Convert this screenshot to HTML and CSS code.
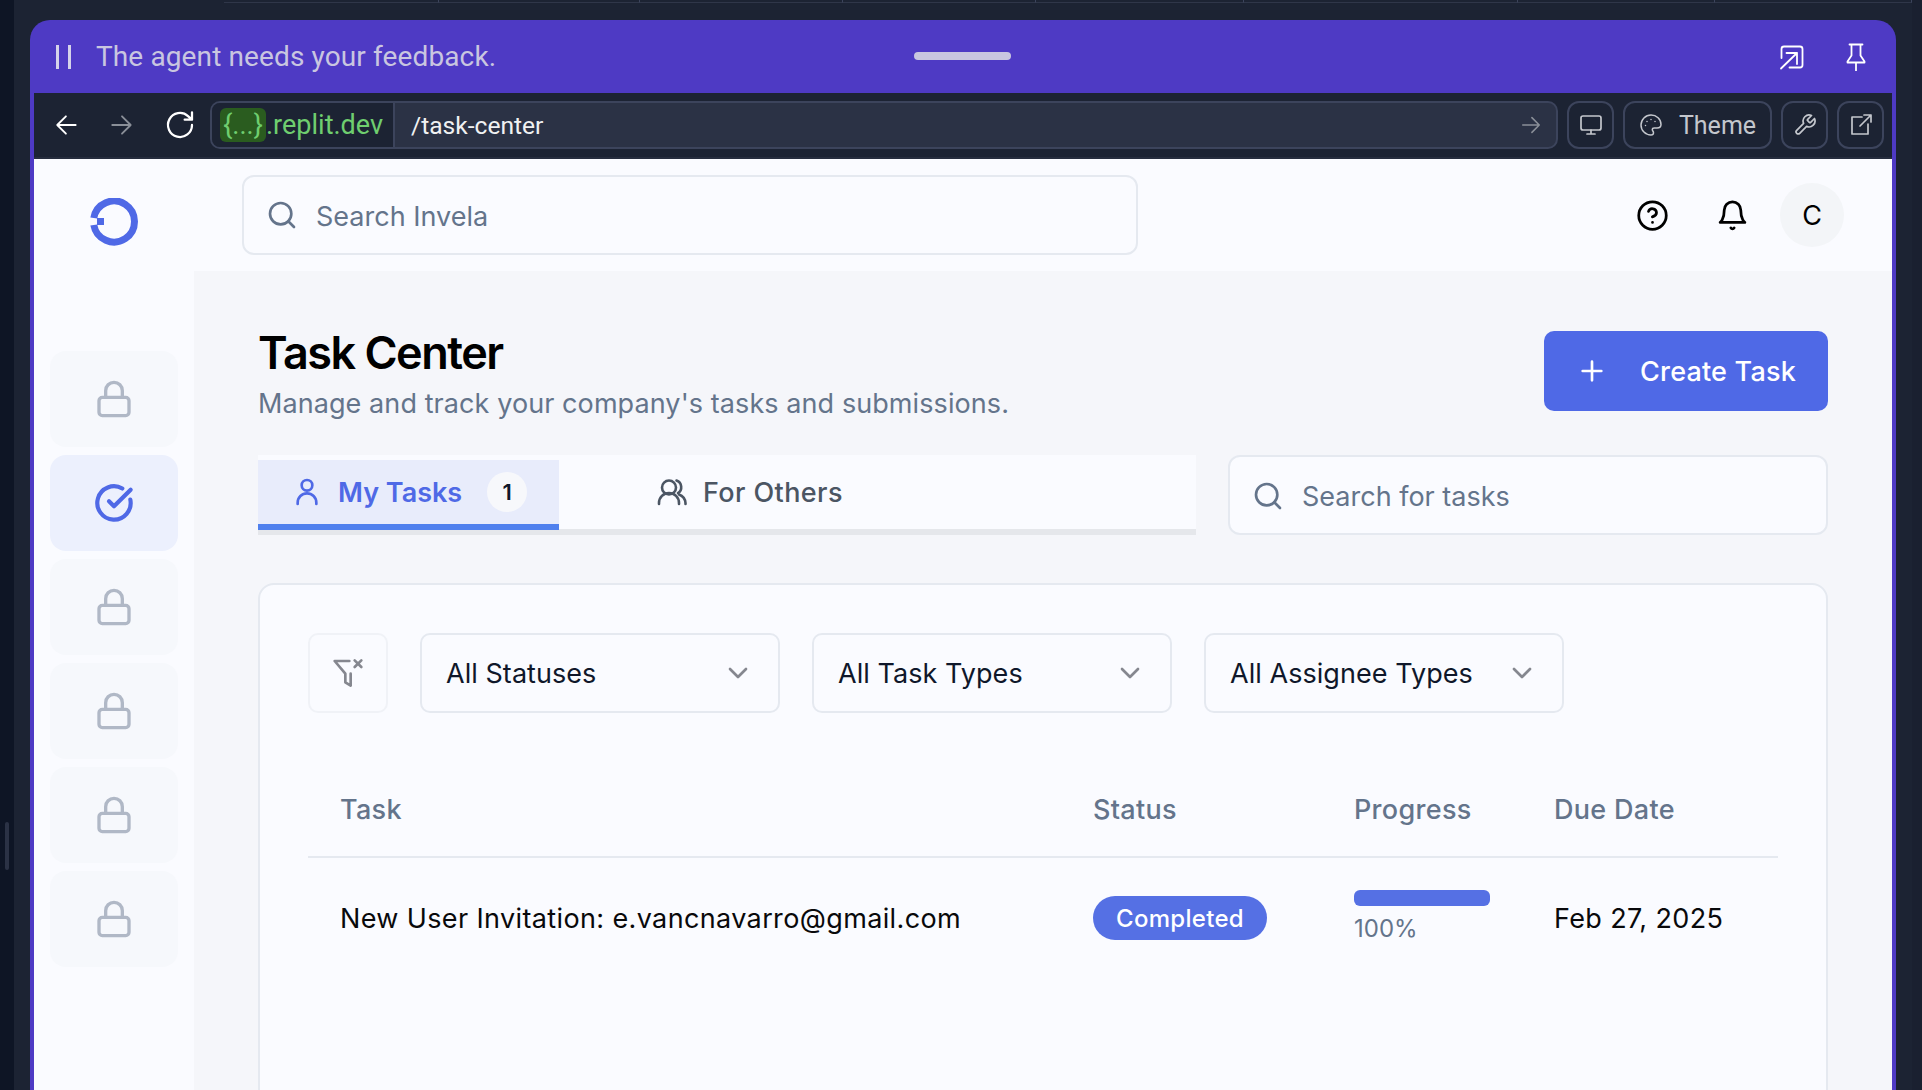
FILE: index.html
```html
<!DOCTYPE html>
<html lang="en">
  <head>
    <meta charset="UTF-8" />
    <title>Task Center</title>
    <link rel="stylesheet" href="styles.css">
  </head>
  <body>
    <div class="side-strip"><span class="drag-handle"></span></div>
    <div class="stage">
      <div class="top-strip">
        <span class="strip-tab" style="width: 215px"></span>
        <span class="strip-tab" style="width: 201px"></span>
        <span class="strip-tab" style="width: 203px"></span>
        <span class="strip-tab" style="width: 193px"></span>
        <span class="strip-tab" style="width: 208px"></span>
        <span class="strip-tab" style="width: 274px"></span>
        <span class="strip-tab" style="width: 197px"></span>
        <span class="strip-tab" style="width: 197px"></span>
      </div>
      <div class="window">
        <!-- Agent banner -->
        <div class="agent-bar">
          <div class="agent-left">
            <span class="pause-mark"><i></i><i></i></span>
            <span class="agent-text">The agent needs your feedback.</span>
          </div>
          <span class="grabber"></span>
          <div class="agent-right">
            <svg class="agent-icon" viewBox="0 0 28 28" fill="none" stroke="#fff" stroke-width="1.800">
              <path d="M3.500 15V6A2.500 2.500 0 0 1 6 3.500h16A2.500 2.500 0 0 1 24.500 6v16a2.500 2.500 0 0 1-2.500 2.500H11.500" />
              <path d="M3 25.500 19 10M8.500 10H19v11" />
            </svg>
            <svg class="agent-icon" viewBox="0 0 28 28" fill="none" stroke="#fff" stroke-width="1.800">
              <path d="M7.500 1.500h13M9.500 1.500v11l-4 6v1h17v-1l-4-6v-11M14 19.500V28" />
            </svg>
          </div>
        </div>

        <!-- Browser bar -->
        <div class="browser-bar">
          <div class="nav-buttons">
            <svg class="nav-icon" viewBox="0 0 24 24" fill="none" stroke="#fff" stroke-width="1.700"><path d="M20 12H3M11 4l-8 8 8 8" /></svg>
            <svg class="nav-icon" viewBox="0 0 24 24" fill="none" stroke="#8a8f98" stroke-width="1.700"><path d="M3 12h17M12 4l8 8-8 8" /></svg>
            <svg class="nav-icon nav-reload" viewBox="0 0 24 24" fill="none" stroke="#fff" stroke-width="1.700"><path d="M21 12a9 9 0 1 1-3-6.700L21 8M21 2.500V8h-5.500" /></svg>
          </div>
          <div class="url-box">
            <div class="url-host"><span class="url-mask">{...}</span>.replit.dev</div>
            <div class="url-path">/task-center</div>
            <svg class="url-go" viewBox="0 0 24 24" fill="none" stroke="#8a8f98" stroke-width="1.700"><path d="M3 12h18M13 4l8 8-8 8" /></svg>
          </div>
          <button class="bar-btn">
            <svg viewBox="0 0 24 24" fill="none" stroke="#c4c7cd" stroke-width="1.700"><rect x="2" y="3" width="20" height="14" rx="2" /><path d="M12 17v4M8 21h8" /></svg>
          </button>
          <button class="bar-btn bar-btn-theme">
            <svg viewBox="0 0 24 24" fill="none" stroke="#c4c7cd" stroke-width="1.500"><path d="M12 2a10 10 0 0 0 0 20c1.800 0 2.500-1.200 2.500-2.300 0-1.500-1.200-1.800-1.200-3 0-1.100.9-1.700 2-1.700H18c2.300 0 4-1.500 4-3.500C22 6 17.500 2 12 2Z" /><path d="M8 8.500h.01M12 6.500h.01M16 8.500h.01M6.500 12.500h.01" /></svg>
            Theme
          </button>
          <button class="bar-btn">
            <svg viewBox="0 0 24 24" fill="none" stroke="#c4c7cd" stroke-width="1.700"><path d="M14.700 6.300a1 1 0 0 0 0 1.400l1.600 1.600a1 1 0 0 0 1.400 0l3.800-3.800a6 6 0 0 1-7.900 7.900l-6.900 6.900a2.100 2.100 0 0 1-3-3l6.900-6.900a6 6 0 0 1 7.900-7.900Z" /></svg>
          </button>
          <button class="bar-btn">
            <svg viewBox="0 0 24 24" fill="none" stroke="#c4c7cd" stroke-width="1.700"><path d="M13 4H3v17h16V11M11 13 22 2M15 2h7v7" /></svg>
          </button>
        </div>

        <!-- App -->
        <div class="app">
          <header class="app-header">
            <div class="logo-cell">
              <svg class="logo" viewBox="0 0 48 48" fill="none">
                <path d="M3.800 20A20.500 20.500 0 1 1 3.800 27" stroke="#4f69e6" stroke-width="7" />
                <rect x="7" y="20" width="7" height="7" fill="#4f69e6" />
              </svg>
            </div>
            <div class="search-box search-top">
              <svg viewBox="0 0 24 24" fill="none" stroke="#64748b" stroke-width="2"><circle cx="11" cy="11" r="8" /><path d="m21 21-4.300-4.300" /></svg>
              <span>Search Invela</span>
            </div>
            <div class="header-actions">
              <svg class="head-icon" viewBox="0 0 24 24" fill="none" stroke="#000" stroke-width="2"><circle cx="12" cy="12" r="10" /><path d="M9.100 9a3 3 0 0 1 5.800 1c0 2-3 3-3 3M12 17h.01" /></svg>
              <svg class="head-icon" viewBox="0 0 24 24" fill="none" stroke="#000" stroke-width="2"><path d="M6 8a6 6 0 0 1 12 0c0 7 3 9 3 9H3s3-2 3-9M10.800 21a1.400 1.400 0 0 0 2.400 0" /></svg>
              <div class="avatar">C</div>
            </div>
          </header>

          <div class="app-body">
            <nav class="sidebar">
              <a class="side-item"><svg viewBox="0 0 24 24"><rect x="3" y="11" width="18" height="11" rx="2" /><path d="M7 11V7a5 5 0 0 1 10 0v4" /></svg></a>
              <a class="side-item side-active"><svg viewBox="0 0 24 24"><path d="M21.800 10A10 10 0 1 1 17 3.300" /><path d="m9 11 3 3L22 4" /></svg></a>
              <a class="side-item"><svg viewBox="0 0 24 24"><rect x="3" y="11" width="18" height="11" rx="2" /><path d="M7 11V7a5 5 0 0 1 10 0v4" /></svg></a>
              <a class="side-item"><svg viewBox="0 0 24 24"><rect x="3" y="11" width="18" height="11" rx="2" /><path d="M7 11V7a5 5 0 0 1 10 0v4" /></svg></a>
              <a class="side-item"><svg viewBox="0 0 24 24"><rect x="3" y="11" width="18" height="11" rx="2" /><path d="M7 11V7a5 5 0 0 1 10 0v4" /></svg></a>
              <a class="side-item"><svg viewBox="0 0 24 24"><rect x="3" y="11" width="18" height="11" rx="2" /><path d="M7 11V7a5 5 0 0 1 10 0v4" /></svg></a>
            </nav>

            <main class="main">
              <div class="page-head">
                <div>
                  <h1>Task Center</h1>
                  <p>Manage and track your company's tasks and submissions.</p>
                </div>
                <button class="create-btn">
                  <svg viewBox="0 0 24 24" fill="none" stroke="#fff" stroke-width="2"><path d="M5 12h14M12 5v14" /></svg>
                  Create Task
                </button>
              </div>

              <div class="tabs-row">
                <div class="tabs">
                  <div class="tab tab-active">
                    <svg viewBox="0 0 24 24" fill="none" stroke="#4f69e6" stroke-width="2"><path d="M5 21v-1a7 7 0 0 1 14 0v1" /><circle cx="12" cy="7" r="4" /></svg>
                    <span>My Tasks</span>
                    <span class="tab-count">1</span>
                  </div>
                  <div class="tab tab-others">
                    <svg viewBox="0 0 32 32" fill="none" stroke="#4b5563" stroke-width="2.600"><circle cx="13" cy="11.500" r="7" /><path d="M3 28v-1a10 10 0 0 1 20 0v1" /><path d="M20.500 4.500a7 7 0 0 1 1.500 12.500M23 18.500a10 10 0 0 1 6.500 8.500v1" /></svg>
                    <span>For Others</span>
                  </div>
                </div>
                <div class="search-box search-tasks">
                  <svg viewBox="0 0 24 24" fill="none" stroke="#64748b" stroke-width="2"><circle cx="11" cy="11" r="8" /><path d="m21 21-4.300-4.300" /></svg>
                  <span>Search for tasks</span>
                </div>
              </div>

              <section class="card">
                <div class="filters">
                  <button class="filter-clear">
                    <svg viewBox="0 0 24 24" fill="none" stroke="#85878f" stroke-width="2"><path d="M13 3H2l8 9.500V19l4 2.500V12.500" /><path d="m17 2.500 5 5M22 2.500l-5 5" /></svg>
                  </button>
                  <div class="select"><span>All Statuses</span><svg viewBox="0 0 24 24" fill="none" stroke="#85878f" stroke-width="2"><path d="m6 9 6 6 6-6" /></svg></div>
                  <div class="select"><span>All Task Types</span><svg viewBox="0 0 24 24" fill="none" stroke="#85878f" stroke-width="2"><path d="m6 9 6 6 6-6" /></svg></div>
                  <div class="select"><span>All Assignee Types</span><svg viewBox="0 0 24 24" fill="none" stroke="#85878f" stroke-width="2"><path d="m6 9 6 6 6-6" /></svg></div>
                </div>

                <table class="task-table">
                  <colgroup>
                    <col class="col-task" /><col class="col-status" /><col class="col-progress" /><col />
                  </colgroup>
                  <thead>
                    <tr><th>Task</th><th>Status</th><th>Progress</th><th>Due Date</th></tr>
                  </thead>
                  <tbody>
                    <tr>
                      <td>New User Invitation: e.vancnavarro@gmail.com</td>
                      <td><span class="badge">Completed</span></td>
                      <td class="progress-cell">
                        <div class="progress"><div class="progress-fill" style="width: 100%"></div></div>
                        <div class="progress-label">100%</div>
                      </td>
                      <td>Feb 27, 2025</td>
                    </tr>
                  </tbody>
                </table>
              </section>
            </main>
          </div>
        </div>
      </div>
      <div class="right-strip"></div>
    </div>
  </body>
</html>
```

FILE: styles.css
```css
* {
  margin: 0;
  padding: 0;
  box-sizing: border-box;
}

body {
  display: flex;
  width: 1922px;
  height: 1090px;
  overflow: hidden;
  background-color: #1c2333;
  font-family: Inter, sans-serif;
}

button {
  font-family: inherit;
  background: none;
  border: none;
}

svg {
  stroke-linecap: round;
  stroke-linejoin: round;
}

/* Outer dark frame */
.side-strip {
  position: relative;
  flex: 0 0 14px;
  background-color: #0e1525;
}

.drag-handle {
  position: absolute;
  left: 5px;
  top: 822px;
  width: 4px;
  height: 48px;
  border-radius: 2px;
  background-color: #2b3245;
}

.stage {
  position: relative;
  flex: 1;
  padding-left: 16px;
}

.top-strip {
  display: flex;
  height: 20px;
  padding-left: 194px;
}

.strip-tab {
  height: 3px;
  border-right: 1px solid #3c445c;
  border-bottom: 1px solid #2f3649;
}

.right-strip {
  position: absolute;
  top: 0;
  right: 0;
  width: 10px;
  height: 100%;
  background-color: #1a2030;
}

/* Floating window */
.window {
  width: 1866px;
  height: 1070px;
  padding: 0 4px;
  overflow: hidden;
  border-radius: 20px 20px 0 0;
  background-color: #4e3ac4;
}

.agent-bar {
  position: relative;
  display: flex;
  justify-content: space-between;
  align-items: center;
  height: 73px;
  padding: 0 22px;
}

.agent-left {
  display: flex;
  align-items: center;
  gap: 25px;
}

.pause-mark {
  display: flex;
  gap: 9px;
}

.pause-mark i {
  width: 3px;
  height: 24px;
  background-color: #d5d3ea;
}

.agent-text {
  font-family: Roboto, sans-serif;
  font-size: 28px;
  letter-spacing: 0.12px;
  color: #c9c6e0;
}

.grabber {
  position: absolute;
  left: 880px;
  top: 32px;
  width: 97px;
  height: 8px;
  border-radius: 4px;
  background-color: #c9c6e0;
}

.agent-right {
  display: flex;
  gap: 36px;
}

.agent-icon {
  width: 28px;
  height: 28px;
}

.browser-bar {
  display: flex;
  align-items: center;
  gap: 9px;
  height: 66px;
  padding: 0 8px 0 20px;
  background-color: #1c2333;
  border-bottom: 2px solid #262d3e;
}

.nav-buttons {
  display: flex;
  align-items: center;
  gap: 29px;
  width: 147px;
}

.nav-icon {
  width: 26px;
  height: 26px;
}

.nav-reload {
  width: 32px;
  height: 32px;
}

.url-box {
  display: flex;
  align-items: center;
  width: 1348px;
  height: 48px;
  border: 2px solid #3c445c;
  border-radius: 10px;
  background-color: #2b3245;
  font-family: Roboto, sans-serif;
  font-size: 25px;
}

.url-host {
  display: flex;
  align-items: center;
  width: 183px;
  height: 100%;
  padding-left: 8px;
  border-right: 2px solid #3c445c;
  background-color: #1c2333;
  border-radius: 8px 0 0 8px;
  font-size: 27px;
  color: #6fce6f;
}

.url-mask {
  width: 46px;
  border-radius: 6px;
  background-color: #2a5c1f;
  text-align: center;
  line-height: 34px;
}

.url-path {
  flex: 1;
  padding-left: 16px;
  font-size: 24.600px;
  color: #f0f1f2;
}

.url-go {
  width: 22px;
  height: 22px;
  margin-right: 14px;
}

.bar-btn {
  display: flex;
  align-items: center;
  justify-content: center;
  gap: 16px;
  width: 47px;
  height: 48px;
  border: 2px solid #3c445c;
  border-radius: 12px;
  font-family: Roboto, sans-serif;
  font-size: 25px;
  color: #c4c7cd;
}

.bar-btn svg {
  width: 24px;
  height: 24px;
}

.bar-btn-theme {
  width: 149px;
}

/* App */
.app {
  height: 931px;
  background-color: #fafbff;
}

.app-header {
  display: flex;
  align-items: center;
  height: 112px;
}

.logo-cell {
  display: flex;
  justify-content: center;
  width: 160px;
  padding-top: 14px;
}

.logo {
  width: 48px;
  height: 48px;
  stroke-linecap: butt;
}

.search-box {
  display: flex;
  align-items: center;
  height: 80px;
  border: 2px solid #e5e9f0;
  border-radius: 12px;
  background-color: #fafbff;
  font-size: 27px;
  color: #64748b;
}

.search-box svg {
  width: 32px;
  height: 32px;
}

.search-top {
  width: 896px;
  margin-left: 48px;
  gap: 18px;
  padding-left: 22px;
}

.search-top span {
  padding-top: 2px;
}

.header-actions {
  display: flex;
  align-items: center;
  gap: 47px;
  margin-left: auto;
  margin-right: 48px;
}

.head-icon {
  width: 33px;
  height: 33px;
}

.avatar {
  display: flex;
  align-items: center;
  justify-content: center;
  width: 64px;
  height: 64px;
  margin-left: -16px;
  border-radius: 50%;
  background-color: #f3f5f8;
  font-size: 27px;
}

.app-body {
  display: flex;
  height: 819px;
}

.sidebar {
  display: flex;
  flex-direction: column;
  gap: 8px;
  width: 160px;
  padding: 80px 16px 0;
}

.side-item {
  display: flex;
  flex: 0 0 96px;
  align-items: center;
  justify-content: center;
  border-radius: 16px;
  background-color: #f6f8fc;
}

.side-item svg {
  width: 40px;
  height: 40px;
  fill: none;
  stroke: #b0b8c6;
  stroke-width: 2;
}

.side-active {
  background-color: #ecf0fd;
}

.side-active svg {
  stroke: #4f69e6;
  stroke-width: 2.500;
}

.main {
  flex: 1;
  padding: 60px 64px 0;
  background-color: #f5f6fa;
}

.page-head {
  display: flex;
  justify-content: space-between;
  align-items: flex-start;
  height: 80px;
}

h1 {
  margin-top: -5px;
  font-size: 45px;
  line-height: 54px;
  font-weight: 600;
  letter-spacing: -1.500px;
  color: #000;
}

.page-head p {
  margin-top: 6px;
  font-size: 27px;
  line-height: 36px;
  letter-spacing: 0.08px;
  color: #64748b;
}

.create-btn {
  display: flex;
  align-items: center;
  gap: 32px;
  width: 284px;
  height: 80px;
  padding-left: 32px;
  border-radius: 10px;
  background-color: #4f69e6;
  font-size: 27px;
  font-weight: 500;
  letter-spacing: 0.2px;
  color: #fff;
}

.create-btn svg {
  width: 32px;
  height: 32px;
}

.tabs-row {
  display: flex;
  justify-content: space-between;
  margin-top: 44px;
}

.tabs {
  display: flex;
  width: 938px;
  height: 80px;
  background-color: #fafbff;
  border-bottom: 6px solid #e5e7eb;
}

.tab {
  display: flex;
  align-items: center;
  gap: 15px;
  font-size: 27px;
  font-weight: 500;
  letter-spacing: 0.4px;
  color: #4b5563;
}

.tab svg {
  width: 32px;
  height: 32px;
}

.tab-active {
  width: 301px;
  height: 70px;
  margin-top: 5px;
  padding-left: 33px;
  background-color: #e8ecfb;
  border-bottom: 6px solid #4f80ee;
  color: #4f69e6;
  letter-spacing: 0;
  font-weight: 600;
}

.tab-others {
  padding-left: 97px;
}

.tab-count {
  display: flex;
  align-items: center;
  justify-content: center;
  width: 40px;
  height: 40px;
  margin-left: 10px;
  border-radius: 50%;
  background-color: #f7f8fb;
  font-size: 22px;
  color: #0f172a;
}

.search-tasks {
  width: 600px;
  gap: 18px;
  padding-left: 22px;
  padding-top: 2px;
}

.card {
  height: 600px;
  margin-top: 48px;
  padding: 48px 48px 0;
  border: 2px solid #e5e9f0;
  border-radius: 16px 16px 0 0;
  background-color: #fafbff;
}

.filters {
  display: flex;
  gap: 32px;
}

.filter-clear {
  display: flex;
  align-items: center;
  justify-content: center;
  width: 80px;
  height: 80px;
  border: 2px solid #f0f2f7;
  border-radius: 10px;
}

.filter-clear svg {
  width: 32px;
  height: 32px;
}

.select {
  display: flex;
  justify-content: space-between;
  align-items: center;
  width: 360px;
  height: 80px;
  padding: 0 24px;
  border: 2px solid #e5e9f0;
  border-radius: 10px;
  font-size: 27px;
  letter-spacing: 0.05px;
  color: #0f172a;
}

.select svg {
  width: 32px;
  height: 32px;
}

.task-table {
  width: 1470px;
  margin-top: 32px;
  border-collapse: collapse;
  table-layout: fixed;
  font-size: 27px;
}

.col-task {
  width: 753px;
}

.col-status {
  width: 261px;
}

.col-progress {
  width: 200px;
}

.task-table th {
  height: 112px;
  padding: 18px 0 0 32px;
  border-bottom: 2px solid #e5e9f0;
  text-align: left;
  font-weight: 500;
  letter-spacing: 0.3px;
  color: #64748b;
}

.task-table td {
  height: 122px;
  padding-left: 32px;
  color: #09090b;
  font-weight: 400;
  letter-spacing: 0.37px;
}

.task-table .progress-cell {
  padding-bottom: 5px;
}

.badge {
  display: inline-block;
  padding: 1px 23px 0;
  margin-bottom: 2px;
  border-radius: 22px;
  background-color: #5570e4;
  line-height: 43px;
  font-size: 24px;
  font-weight: 500;
  letter-spacing: 0.3px;
  color: #fff;
  vertical-align: middle;
}

.progress {
  width: 136px;
  height: 16px;
  border-radius: 6px;
  overflow: hidden;
  background-color: #e5e9f0;
}

.progress-fill {
  height: 100%;
  background-color: #5570e4;
}

.progress-label {
  margin-top: 8px;
  font-size: 24px;
  font-weight: 400;
  letter-spacing: 0;
  color: #64748b;
}
```
